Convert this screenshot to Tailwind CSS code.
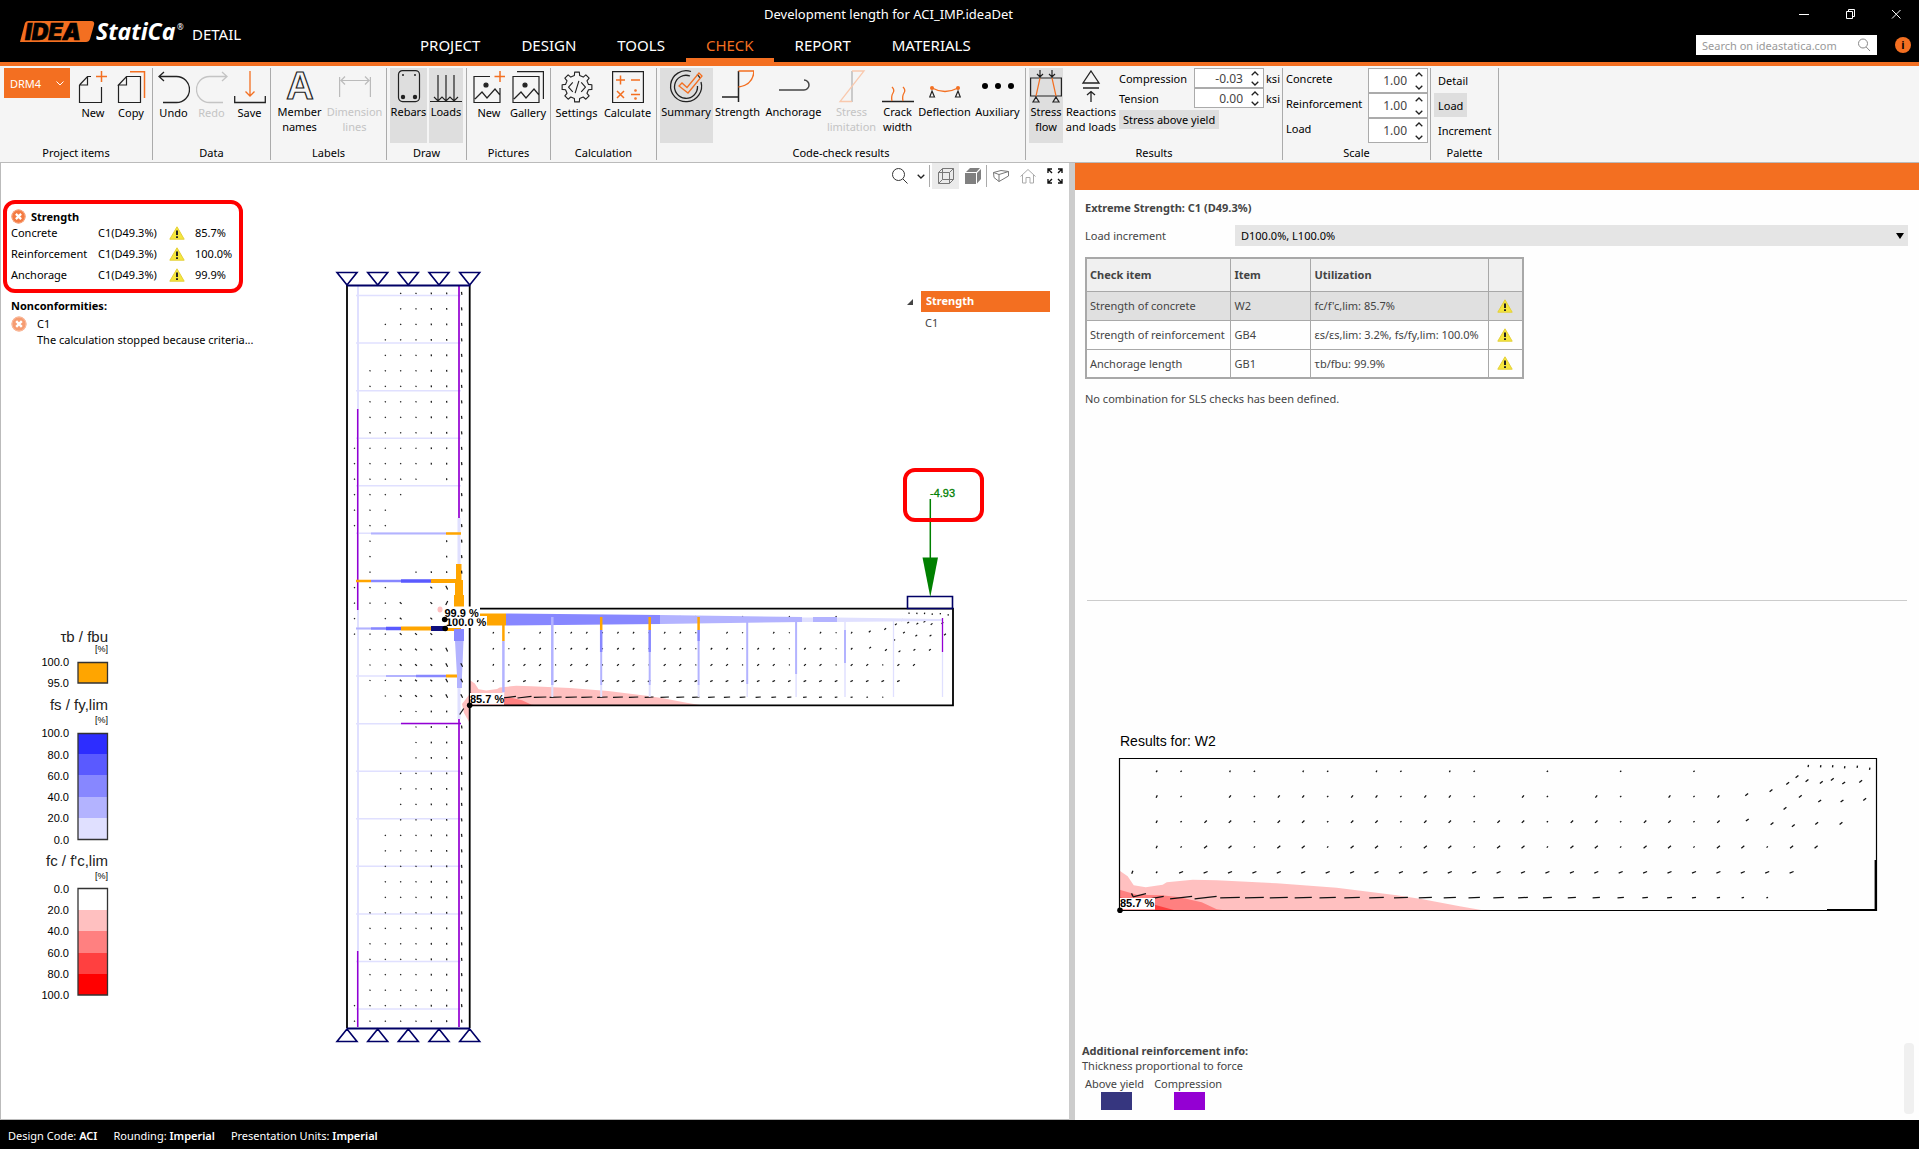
<!DOCTYPE html>
<html lang="en">
<head>
    <meta charset="UTF-8">
    <meta name="viewport" content="width=device-width, initial-scale=1.0">
    <title>Development length for ACI_IMP.ideaDet</title>
    <script src="https://cdn.jsdelivr.net/npm/@tailwindcss/browser@4"></script>
</head>
<body class="min-h-screen flex flex-col bg-white text-black font-['Noto_Sans',sans-serif] text-[11px] leading-[15px]">

    <!-- Shared symbols -->
    <svg class="hidden">
        <symbol id="warn" viewBox="0 0 16 14">
            <path d="M8 .8L15.2 13.2H.8Z" fill="#f5e63c" stroke="#e3cf3a" stroke-linejoin="round"/>
            <path d="M8 4.5V9M8 10.2V12" stroke="#222" stroke-width="2"/>
        </symbol>
        <symbol id="fail" viewBox="0 0 16 16">
            <circle cx="8" cy="8" r="7.5" fill="#f47b42"/>
            <circle cx="8" cy="8" r="7" fill="none" stroke="#f9ab86"/>
            <path d="M5.2 5.2L10.8 10.8M10.8 5.2L5.2 10.8" stroke="#fff" stroke-width="2.4"/>
        </symbol>
        <symbol id="spin-up" viewBox="0 0 8 5"><path d="M.7 4.3L4 1L7.3 4.3" fill="none" stroke="#222" stroke-width="1.3"/></symbol>
        <symbol id="spin-down" viewBox="0 0 8 5"><path d="M.7 .7L4 4L7.3 .7" fill="none" stroke="#222" stroke-width="1.3"/></symbol>
    </svg>

    <!-- Title bar and main menu -->
    <header class="flex h-[66px] bg-black border-b-4 border-[#f36f21] text-white">
        <div class="w-[400px] flex items-start pt-5 pl-5">
            <svg class="w-[166px] h-6 overflow-visible" viewBox="0 0 166 24" role="img" aria-label="IDEA StatiCa">
                <path d="M8 1H71Q75 1 74 5L70 19Q69 22 66 22H0L5 3Q6 1 8 1Z" fill="#f36f21"/>
                <text x="5" y="20" font-family="Inter" font-weight="900" font-style="italic" font-size="23" fill="#000" stroke="#000" stroke-width=".6">IDEA</text>
                <text x="76" y="20" font-family="Noto Sans" font-weight="700" font-style="italic" font-size="23" fill="#fff">StatiCa</text>
                <text x="157" y="10" font-family="Noto Sans" font-size="8" fill="#fff">®</text>
            </svg>
            <span class="ml-1.5 mt-1 text-[15px] leading-[20px]">DETAIL</span>
        </div>
        <div class="flex-1 flex flex-col">
            <div class="h-7 flex items-center">
                <h1 class="ml-[364px] text-[13px]">Development length for ACI_IMP.ideaDet</h1>
                <div class="ml-auto flex">
                    <button class="w-[46px] h-7 flex items-center justify-center" aria-label="Minimize"><svg class="w-3 h-3" viewBox="0 0 12 12"><path d="M1 6.5H11" stroke="#fff"/></svg></button>
                    <button class="w-[46px] h-7 flex items-center justify-center" aria-label="Restore"><svg class="w-3 h-3" viewBox="0 0 12 12" fill="none" stroke="#fff"><path d="M2.5 3.5H8.5V10.5H2.5ZM4.5 3V1.5H10.5V8.5H9"/></svg></button>
                    <button class="w-[46px] h-7 flex items-center justify-center" aria-label="Close"><svg class="w-3 h-3" viewBox="0 0 12 12"><path d="M2 2L10.5 10.5M10.5 2L2 10.5" stroke="#fff"/></svg></button>
                </div>
            </div>
            <div class="h-[34px] flex items-center">
                <nav class="h-full flex gap-px text-[15px] leading-[35px]">
                    <a href="#" class="px-5">PROJECT</a>
                    <a href="#" class="px-5">DESIGN</a>
                    <a href="#" class="px-5">TOOLS</a>
                    <a href="#" class="px-5 text-[#f36f21] border-b-4 border-[#f36f21]">CHECK</a>
                    <a href="#" class="px-5">REPORT</a>
                    <a href="#" class="px-5">MATERIALS</a>
                </nav>
                <div class="ml-auto w-[181px] h-5 bg-white flex items-center px-1.5">
                    <input type="text" aria-label="Search" placeholder="Search on ideastatica.com" class="w-full min-w-0 outline-none text-[11px] text-gray-500 placeholder:text-[#999]">
                    <svg class="w-3.5 h-3.5 shrink-0" viewBox="0 0 14 14" fill="none" stroke="#888"><circle cx="6" cy="5.5" r="4.5"/><path d="M9.2 9L13 13"/></svg>
                </div>
                <button class="ml-[18px] mr-2 w-4 h-4 rounded-full bg-[#f36f21] text-black text-[11px] leading-4 font-bold" aria-label="Info">i</button>
            </div>
        </div>
    </header>

    <!-- Ribbon -->
    <div class="h-[97px] flex bg-[#f5f5f5] border-b border-[#bbb] py-0.5">
        <section class="w-[153px] flex flex-col justify-between border-r border-[#ababab] text-center">
            <div class="flex pl-1">
                <button class="w-[66px] h-[30px] mr-1 bg-[#f36f21] text-white flex items-center justify-between px-1.5">DRM4
                    <svg class="w-2 h-[5px]" viewBox="0 0 8 5"><path d="M.5 .5L4 4L7.5 .5" fill="none" stroke="#fff"/></svg></button>
                <button class="w-[38px] flex flex-col items-center pt-[3px]">
                    <svg class="w-8 h-[34px]" viewBox="2 0 32 34" fill="none" stroke="#222" stroke-width="1.2"><path d="M4.5 14V31.5H26.5V16M4.5 14L12.5 5.5H16M12.5 5.5V14H4.5"/><path d="M26.5 0V11M21 5.5H32" stroke="#f36f21" stroke-width="1.5"/></svg>
                    New</button>
                <button class="w-[38px] flex flex-col items-center pt-[3px]">
                    <svg class="w-8 h-[34px]" viewBox="0 0 32 34" fill="none" stroke="#222" stroke-width="1.2"><path d="M3.5 14V31.5H25.5V5.5H11.5L3.5 14H11.5V5.5"/><path d="M15 .7H29.5V27" stroke="#f36f21" stroke-width="1.5"/></svg>
                    Copy</button>
            </div>
            <h2>Project items</h2>
        </section>
        <section class="w-[118px] flex flex-col justify-between border-r border-[#ababab] text-center">
            <div class="flex justify-center">
                <button class="w-[38px] flex flex-col items-center pt-[3px]">
                    <svg class="w-8 h-[34px]" viewBox="0 0 32 34" fill="none" stroke="#222" stroke-width="1.3"><path d="M1 5.5H18.5a13 13 0 0 1 0 26H5M6 1L1 5.5L6 10"/></svg>
                    Undo</button>
                <button class="w-[38px] flex flex-col items-center pt-[3px] text-[#c4c4c4]">
                    <svg class="w-8 h-[34px]" viewBox="0 0 32 34" fill="none" stroke="#c4c4c4" stroke-width="1.3"><path d="M31 5.5H13.5a13 13 0 0 0 0 26H27M26 1L31 5.5L26 10"/></svg>
                    Redo</button>
                <button class="w-[38px] flex flex-col items-center pt-[3px]">
                    <svg class="w-8 h-[34px]" viewBox="0 0 32 34" fill="none" stroke="#222" stroke-width="1.3"><path d="M.7 25V31.5H31.3V25"/><path d="M16 0V25M11.5 20.5L16 25L20.5 20.5" stroke="#f36f21"/></svg>
                    Save</button>
            </div>
            <h2>Data</h2>
        </section>
        <section class="w-[116px] flex flex-col justify-between border-r border-[#ababab] text-center">
            <div class="flex justify-center">
                <button class="w-[52px] flex flex-col items-center pt-0.5">
                    <svg class="w-8 h-[34px] overflow-visible" viewBox="0 0 32 34"><text x="16" y="29" text-anchor="middle" font-family="Liberation Sans" font-weight="700" font-size="38" fill="none" stroke="#222" stroke-width="1.2">A</text></svg>
                    Member<br>names</button>
                <button class="w-[58px] flex flex-col items-center pt-0.5 text-[#c4c4c4]">
                    <svg class="w-8 h-[34px]" viewBox="0 0 32 34" fill="none" stroke="#bbb" stroke-width="1.2"><path d="M.6 7V27M31.4 7V27M2 10.5H30M6 6.5L2 10.5L6 14.5M26 6.5L30 10.5L26 14.5"/></svg>
                    Dimension<br>lines</button>
            </div>
            <h2>Labels</h2>
        </section>
        <section class="w-[80px] flex flex-col justify-between border-r border-[#ababab] text-center">
            <div class="flex justify-center gap-0.5">
                <button class="w-[37px] h-[75px] flex flex-col items-center pt-0.5 bg-[#dedede]">
                    <svg class="w-8 h-[34px]" viewBox="0 0 32 34" fill="none" stroke="#222" stroke-width="1.2"><rect x="5.5" y=".6" width="21" height="31" rx="4"/><g fill="#222" stroke="none"><circle cx="10" cy="5" r="1"/><circle cx="22" cy="5" r="1"/><circle cx="10" cy="27" r="2.2"/><circle cx="22" cy="27" r="2.2"/></g></svg>
                    Rebars</button>
                <button class="w-[34px] h-[75px] flex flex-col items-center pt-0.5 bg-[#dedede]">
                    <svg class="w-8 h-[34px]" viewBox="0 0 32 34" fill="none" stroke="#222" stroke-width="1.2"><path d="M0 31.5H32M8 5V31M16 5V31M24 5V31M4 27L8 31L12 27L16 31L20 27L24 31L28 27"/></svg>
                    Loads</button>
            </div>
            <h2>Draw</h2>
        </section>
        <section class="w-[84px] flex flex-col justify-between border-r border-[#ababab] text-center">
            <div class="flex justify-center">
                <button class="w-[39px] flex flex-col items-center pt-[3px]">
                    <svg class="w-8 h-[34px]" viewBox="0 0 32 34" fill="none" stroke="#222" stroke-width="1.2"><path d="M17 5.5H1V31.5H27V17M2 28L9 21L14 27L22 18L27 24"/><circle cx="13" cy="14" r="2" fill="#222"/><path d="M27 0V11M21.5 5.5H32" stroke="#f36f21" stroke-width="1.5"/></svg>
                    New</button>
                <button class="w-[39px] flex flex-col items-center pt-[3px]">
                    <svg class="w-8 h-[34px]" viewBox="0 0 32 34" fill="none" stroke="#222" stroke-width="1.2"><path d="M1 5.5H27V31.5H1ZM5 .6H31.4V28M2 28L9 21L14 27L22 18L27 24"/><circle cx="13" cy="14" r="2" fill="#222"/></svg>
                    Gallery</button>
            </div>
            <h2>Pictures</h2>
        </section>
        <section class="w-[106px] flex flex-col justify-between border-r border-[#ababab] text-center">
            <div class="flex justify-center">
                <button class="w-[48px] flex flex-col items-center pt-[3px]">
                    <svg class="w-8 h-[34px]" viewBox="0 1 34 34" fill="none" stroke="#222" stroke-width="1.2" stroke-linejoin="round"><path d="M29.2 14.2L32.8 14.5V19.5L29.2 19.8L27.6 23.6L29.9 26.4L26.4 29.9L23.6 27.6L19.8 29.2L19.5 32.8H14.5L14.2 29.2L10.4 27.6L7.6 29.9L4.1 26.4L6.4 23.6L4.8 19.8L1.2 19.5V14.5L4.8 14.2L6.4 10.4L4.1 7.6L7.6 4.1L10.4 6.4L14.2 4.8L14.5 1.2H19.5L19.8 4.8L23.6 6.4L26.4 4.1L29.9 7.6L27.6 10.4Z"/><path d="M12.5 12L8 17L12.5 22M21.5 12L26 17L21.5 22M19 10.5L15 23.5"/></svg>
                    Settings</button>
                <button class="w-[54px] flex flex-col items-center pt-[3px]">
                    <svg class="w-8 h-[34px]" viewBox="0 0 32 34" fill="none" stroke="#222" stroke-width="1.2"><path d="M.6 .6H31.4V31.5H.6Z"/><g stroke="#f36f21" stroke-width="1.5"><path d="M4 9H13M8.5 4.5V13.5M19 9H28M5 20L12 27M12 20L5 27M19 23.5H28"/><circle cx="23.5" cy="19.5" r=".6"/><circle cx="23.5" cy="27.5" r=".6"/></g></svg>
                    Calculate</button>
            </div>
            <h2>Calculation</h2>
        </section>
        <section class="w-[369px] flex flex-col justify-between border-r border-[#ababab] text-center">
            <div class="flex justify-center">
                <button class="w-[53px] h-[75px] flex flex-col items-center pt-0.5 bg-[#dedede]">
                    <svg class="w-8 h-[34px] overflow-visible" viewBox="0 0 32 34" fill="none" stroke="#222" stroke-width="1.3"><path d="M21 1.5A15.5 15.5 0 1 0 31 12M27 4.5Q29 6 30 8M20 6A11.5 11.5 0 1 0 27.5 16"/><path d="M9 16L12 13L17 17.5L29 3L32 6L18 23Z" stroke="#f36f21"/></svg>
                    Summary</button>
                <button class="w-[50px] flex flex-col items-center pt-0.5">
                    <svg class="w-8 h-[34px]" viewBox="0 0 32 34" fill="none" stroke="#222" stroke-width="1.5"><path d="M0 27H16M16.5 1V32"/><path d="M16.5 1H32Q31 15 16.5 17" stroke="#f36f21"/></svg>
                    Strength</button>
                <button class="w-[62px] flex flex-col items-center pt-0.5">
                    <svg class="w-8 h-[34px]" viewBox="0 0 32 34" fill="none" stroke="#444" stroke-width="1.5"><path d="M1 20H26A5 5 0 0 0 26 10"/></svg>
                    Anchorage</button>
                <button class="w-[54px] flex flex-col items-center pt-0.5 text-[#c4c4c4]">
                    <svg class="w-8 h-[34px]" viewBox="0 0 32 34" fill="none"><path d="M16 1V32" stroke="#bbb" stroke-width="1.5"/><path d="M16 1H28L4 31.5H16" stroke="#f9c9ae" stroke-width="1.3"/></svg>
                    Stress<br>limitation</button>
                <button class="w-[38px] flex flex-col items-center pt-0.5">
                    <svg class="w-8 h-[34px]" viewBox="0 0 32 34" fill="none"><path d="M0 31.5H32" stroke="#222" stroke-width="1.5"/><path d="M10 17Q13 20 11 23T10 31M21 17Q24 20 22 23T21 31" stroke="#f36f21" stroke-width="1.3"/></svg>
                    Crack<br>width</button>
                <button class="w-[56px] flex flex-col items-center pt-0.5">
                    <svg class="w-8 h-[34px]" viewBox="0 0 32 34" fill="none"><path d="M3 18Q16 25 29 18" stroke="#f36f21" stroke-width="1.4"/><circle cx="3" cy="18" r="2" fill="#f36f21"/><circle cx="29" cy="18" r="2" fill="#f36f21"/><path d="M3 21L5.5 27H.7ZM29 21L31.3 27H26.5Z" stroke="#222" stroke-width="1.2"/></svg>
                    Deflection</button>
                <button class="w-[50px] flex flex-col items-center pt-0.5">
                    <svg class="w-8 h-[34px]" viewBox="0 0 32 34"><circle cx="3" cy="16" r="3"/><circle cx="16" cy="16" r="3"/><circle cx="29" cy="16" r="3"/></svg>
                    Auxiliary</button>
            </div>
            <h2>Code-check results</h2>
        </section>
        <section class="w-[257px] flex flex-col justify-between border-r border-[#ababab]">
            <div class="flex pl-[3px]">
                <button class="w-[34px] h-[75px] flex flex-col items-center pt-0.5 bg-[#dedede]">
                    <svg class="w-8 h-[34px]" viewBox="0 0 32 34" fill="none" stroke="#222" stroke-width="1.2"><path d="M.6 8H31.4V26H.6ZM10 0V7M7 4L10 7L13 4M22 0V7M19 4L22 7L25 4M6 27L9 32H3ZM26 27L29 32H23Z"/><path d="M10 8L6 26M22 8L26 26" stroke="#f36f21"/></svg>
                    Stress<br>flow</button>
                <button class="w-[56px] flex flex-col items-center pt-0.5">
                    <svg class="w-8 h-[34px]" viewBox="0 0 32 34" fill="none" stroke="#222" stroke-width="1.3"><path d="M16 1L24 13H8ZM8 18H24M16 32V21M12 25L16 21.5L20 25"/></svg>
                    Reactions<br>and loads</button>
                <div>
                    <div class="flex items-center">
                        <label for="comp" class="w-[75px]">Compression</label>
                        <span class="w-[70px] h-5 flex items-center border border-[#ababab] bg-white pr-1">
                            <input id="comp" type="text" value="-0.03" class="w-full min-w-0 text-right text-[12px] text-[#444] pr-2">
                            <span class="flex flex-col gap-[5px]"><svg class="w-2 h-[5px]"><use href="#spin-up"/></svg><svg class="w-2 h-[5px]"><use href="#spin-down"/></svg></span>
                        </span>
                        <span class="ml-0.5">ksi</span>
                    </div>
                    <div class="flex items-center">
                        <label for="tens" class="w-[75px]">Tension</label>
                        <span class="w-[70px] h-5 flex items-center border border-[#ababab] bg-white pr-1">
                            <input id="tens" type="text" value="0.00" class="w-full min-w-0 text-right text-[12px] text-[#444] pr-2">
                            <span class="flex flex-col gap-[5px]"><svg class="w-2 h-[5px]"><use href="#spin-up"/></svg><svg class="w-2 h-[5px]"><use href="#spin-down"/></svg></span>
                        </span>
                        <span class="ml-0.5">ksi</span>
                    </div>
                    <button class="mt-0.5 h-[19px] px-1 bg-[#dedede]">Stress above yield</button>
                </div>
            </div>
            <h2 class="text-center">Results</h2>
        </section>
        <section class="w-[148px] flex flex-col justify-between border-r border-[#ababab]">
            <div class="flex flex-col pl-[3px] pr-0.5">
                <div class="flex justify-between">
                    <label for="sc" class="pt-[3px]">Concrete</label>
                    <span class="w-[60px] h-[25px] flex items-center border border-[#ababab] bg-white pr-1">
                        <input id="sc" type="text" value="1.00" class="w-full min-w-0 text-right text-[12px] text-[#444] pr-2">
                        <span class="flex flex-col gap-2"><svg class="w-2 h-[5px]"><use href="#spin-up"/></svg><svg class="w-2 h-[5px]"><use href="#spin-down"/></svg></span>
                    </span>
                </div>
                <div class="flex justify-between">
                    <label for="sr" class="pt-[3px]">Reinforcement</label>
                    <span class="w-[60px] h-[25px] flex items-center border border-[#ababab] bg-white pr-1">
                        <input id="sr" type="text" value="1.00" class="w-full min-w-0 text-right text-[12px] text-[#444] pr-2">
                        <span class="flex flex-col gap-2"><svg class="w-2 h-[5px]"><use href="#spin-up"/></svg><svg class="w-2 h-[5px]"><use href="#spin-down"/></svg></span>
                    </span>
                </div>
                <div class="flex justify-between">
                    <label for="sl" class="pt-[3px]">Load</label>
                    <span class="w-[60px] h-[25px] flex items-center border border-[#ababab] bg-white pr-1">
                        <input id="sl" type="text" value="1.00" class="w-full min-w-0 text-right text-[12px] text-[#444] pr-2">
                        <span class="flex flex-col gap-2"><svg class="w-2 h-[5px]"><use href="#spin-up"/></svg><svg class="w-2 h-[5px]"><use href="#spin-down"/></svg></span>
                    </span>
                </div>
            </div>
            <h2 class="text-center">Scale</h2>
        </section>
        <section class="w-[68px] flex flex-col justify-between border-r border-[#ababab]">
            <div class="flex flex-col items-start pl-[3px]">
                <button class="h-[25px] px-1">Detail</button>
                <button class="h-6 px-1 bg-[#dedede]">Load</button>
                <button class="h-[26px] px-1">Increment</button>
            </div>
            <h2 class="text-center">Palette</h2>
        </section>
    </div>

    <main class="flex-1 grid grid-cols-[1069fr_850fr]">
        <!-- Model view -->
        <section class="relative border-l border-b border-[#bbb]">
            <svg class="absolute inset-0 w-full h-full" viewBox="1 163 1068 956" preserveAspectRatio="xMinYMin meet" font-family="Liberation Sans">
                <!-- Legend -->
                <g text-anchor="end" font-size="15" fill="#222">
                    <text x="108" y="642">τb / fbu</text>
                    <text x="108" y="710">fs / fy,lim</text>
                    <text x="108" y="866">fc / f'c,lim</text>
                </g>
                <g text-anchor="end" font-size="9">
                    <text x="108" y="652">[%]</text>
                    <text x="108" y="723">[%]</text>
                    <text x="108" y="879">[%]</text>
                </g>
                <g text-anchor="end" font-size="11">
                    <text x="69" y="666">100.0</text><text x="69" y="687">95.0</text>
                    <text x="69" y="737">100.0</text><text x="69" y="759">80.0</text><text x="69" y="780">60.0</text><text x="69" y="801">40.0</text><text x="69" y="822">20.0</text><text x="69" y="844">0.0</text>
                    <text x="69" y="893">0.0</text><text x="69" y="914">20.0</text><text x="69" y="935">40.0</text><text x="69" y="957">60.0</text><text x="69" y="978">80.0</text><text x="69" y="999">100.0</text>
                </g>
                <path d="M78 662H108V683H78Z" fill="#ffa500"/>
                <path d="M78 733H108V754H78Z" fill="#2d2dff"/>
                <path d="M78 754H108V775H78Z" fill="#5a5aff"/>
                <path d="M78 775H108V797H78Z" fill="#8787ff"/>
                <path d="M78 797H108V818H78Z" fill="#b3b3ff"/>
                <path d="M78 818H108V840H78Z" fill="#e0e0ff"/>
                <path d="M78 910H108V931H78Z" fill="#ffc0c0"/>
                <path d="M78 931H108V953H78Z" fill="#ff8080"/>
                <path d="M78 953H108V974H78Z" fill="#ff4040"/>
                <path d="M78 974H108V995H78Z" fill="#ff0000"/>
                <path d="M78 662.5H107.5V683H78ZM78 733.5H107.5V839.5H78ZM78 888.5H107.5V995H78Z" fill="none" stroke="#333" stroke-width="1.3"/>

                <!-- Column reinforcement -->
                <g id="ties" stroke="#e0e0ff" stroke-width="1.5"></g>
                <path d="M358 286V1027" stroke="#e0e0ff" stroke-width="2"/>
                <path d="M357.7 409V610M357.7 951V1027" stroke="#9400d3" stroke-width="1.5"/>
                <path d="M459 518V564M459 688V719" stroke="#e0e0ff" stroke-width="3"/>
                <path d="M459 286V518M459 719V1027" stroke="#9400d3" stroke-width="1.7"/>
                <path d="M371 533.5H446" stroke="#b3b3ff" stroke-width="2"/>
                <path d="M446 533.5H461M356 581H371" stroke="#ffa500" stroke-width="2.5"/>
                <path d="M371 581H401M386 628.5H371M416 676H446" stroke="#8787ff" stroke-width="2.5"/>
                <path d="M401 581H431M386 628.5H401" stroke="#5a5aff" stroke-width="3.5"/>
                <path d="M431 581H457M401 628.5H431" stroke="#ffa500" stroke-width="4"/>
                <path d="M356 628.5H371M386 676H416" stroke="#b3b3ff" stroke-width="2"/>
                <path d="M431 628.5H446" stroke="#10107c" stroke-width="5"/>
                <path d="M446 629.5H461M446 676H461" stroke="#ffa500" stroke-width="3"/>
                <path d="M401 723.5H461" stroke="#9400d3" stroke-width="1.3"/>
                <path d="M456 564H461.5V580H463V595H464V610H454V595H455V580H456Z" fill="#ffa500"/>
                <path d="M454 629H464V641H454Z" fill="#8787ff"/>
                <path d="M455 641H463.5L462 676V688H457V676Z" fill="#b3b3ff"/>
                <path d="M469.7 694L462 704L464 713L469.7 723Z" fill="#ffc0c0"/>
                <ellipse cx="440" cy="609.5" rx="2.5" ry="3" fill="#ffc0c0"/>

                <!-- Beam reinforcement -->
                <g id="field-left"></g>
                <path d="M480 613.5H506V625.5H487V616H480Z" fill="#ffa500"/>
                <path d="M506 613.5L660 615V624L506 625.5Z" fill="#8787ff"/>
                <path d="M660 615L802 617V622L660 624ZM813 617H837V622H813Z" fill="#b3b3ff"/>
                <path d="M802 617.5H813V622H802ZM837 617.5L942 619V621L837 622Z" fill="#e0e0ff"/>
                <g id="stirrups"></g>
                <g id="dots" stroke="#111" stroke-width="1.2"></g>

                <!-- Outline and supports -->
                <path d="M347 285V1028M469.7 285V1028M469.7 608.7H953V705.3H469.7" fill="none" stroke="#000" stroke-width="1.8"/>
                <g fill="none" stroke="#000066" stroke-width="1.6">
                    <path d="M347 285.5H470M347 1028.5H470" stroke-width="2"/>
                    <path d="M347 285L337 272.5H357ZM377.7 285L367.7 272.5H387.7ZM408.3 285L398.3 272.5H418.3ZM439 285L429 272.5H449ZM469.7 285L459.7 272.5H479.7Z"/>
                    <path d="M347 1029L337 1041.5H357ZM377.7 1029L367.7 1041.5H387.7ZM408.3 1029L398.3 1041.5H418.3ZM439 1029L429 1041.5H449ZM469.7 1029L459.7 1041.5H479.7Z"/>
                    <path d="M907.5 596.5H952.5V608.5H907.5Z"/>
                </g>

                <!-- Load -->
                <path d="M930.3 499V560" stroke="#008000" stroke-width="1.5"/>
                <path d="M922.5 557.5H938L930.3 597Z" fill="#008000"/>
                <text x="930" y="497" font-size="11" fill="#008000" stroke="#008000" stroke-width=".3">-4.93</text>
                <rect x="905" y="470" width="77" height="50" rx="10" fill="none" stroke="#f00" stroke-width="4"/>

                <!-- Extremes -->
                <g font-size="11" font-weight="700">
                    <path d="M446 616H486V628H446Z" fill="#fff"/><text x="446" y="626">100.0 %</text>
                    <path d="M444.5 606.5H480V618.5H444.5Z" fill="#fff"/><text x="444.5" y="617">99.9 %</text>
                    <path d="M470 693H504V704.5H470Z" fill="#fff"/><text x="470" y="703">85.7 %</text>
                    <circle cx="444.7" cy="619.5" r="2.8"/><circle cx="445.2" cy="628.5" r="2.8"/><circle cx="469.7" cy="705.3" r="2.8"/>
                </g>
            </svg>

            <!-- Check summary -->
            <div class="absolute left-0.5 top-[37px] w-[240px] h-[93px] border-4 border-[#f00] rounded-[12px] pl-1 pt-1">
                <div class="flex items-center gap-[5px] h-4 font-bold"><svg class="w-[15px] h-[15px]"><use href="#fail"/></svg>Strength</div>
                <div class="grid grid-cols-[87px_75px_22px_auto] auto-rows-[21px] items-center -mt-0.5">
                    <span>Concrete</span><span>C1(D49.3%)</span><svg class="-ml-1 w-4 h-3.5"><use href="#warn"/></svg><span>85.7%</span>
                    <span>Reinforcement</span><span>C1(D49.3%)</span><svg class="-ml-1 w-4 h-3.5"><use href="#warn"/></svg><span>100.0%</span>
                    <span>Anchorage</span><span>C1(D49.3%)</span><svg class="-ml-1 w-4 h-3.5"><use href="#warn"/></svg><span>99.9%</span>
                </div>
            </div>
            <div class="absolute left-2.5 top-[135px]">
                <div class="font-bold">Nonconformities:</div>
                <div class="flex gap-2.5 mt-[3px]">
                    <svg class="w-4 h-4 opacity-75"><use href="#fail"/></svg>
                    <div class="leading-4">C1<br>The calculation stopped because criteria...</div>
                </div>
            </div>

            <!-- View tools -->
            <div class="absolute right-0 top-0 h-[26px] flex items-center">
                <button class="w-[27px] flex justify-center" aria-label="Zoom"><svg class="w-4 h-4" viewBox="0 0 16 16" fill="none" stroke="#333"><circle cx="6.5" cy="6.5" r="6"/><path d="M11 11L15.5 15.5"/></svg></button>
                <button class="w-4 flex justify-center" aria-label="Zoom options"><svg class="w-2 h-[5px]"><use href="#spin-down"/></svg></button>
                <span class="w-px h-[22px] bg-[#aaa] mr-0.5"></span>
                <button class="w-[27px] h-[26px] flex items-center justify-center bg-[#ebebeb]" aria-label="Wireframe"><svg class="w-4 h-4" viewBox="0 0 16 16" fill="none" stroke="#777"><path d="M.5 4.5H11.5V15.5H.5ZM.5 4.5L4.5 .5H15.5L11.5 4.5M15.5 .5V11.5L11.5 15.5M4.5 .5V11.5H15.5M4.5 11.5L.5 15.5"/></svg></button>
                <button class="w-[27px] flex justify-center" aria-label="Solid"><svg class="w-4 h-4" viewBox="0 0 16 16" fill="#808080"><path d="M0 5H11V16H0ZM1 4L5 0H15L11.5 4ZM12 5L16 1V11L12 15.5Z"/></svg></button>
                <span class="w-px h-[22px] bg-[#aaa]"></span>
                <button class="w-[27px] flex justify-center" aria-label="Perspective"><svg class="w-4 h-4" viewBox="0 0 16 16" fill="none" stroke="#777"><path d="M.5 4.5L6 6.5V13.5L1 9.5ZM.5 4.5L8 2.5L15.5 3.5V8L6 13.5M6 6.5L15.5 3.5"/></svg></button>
                <button class="w-[27px] flex justify-center" aria-label="Home"><svg class="w-4 h-4" viewBox="0 0 16 16" fill="none" stroke="#aaa"><path d="M.5 8.5L8 1.5L15.5 8.5M2.5 7V15H6V9.5H10V15H13.5V7"/></svg></button>
                <button class="w-[28px] flex justify-center" aria-label="Fit"><svg class="w-4 h-4" viewBox="0 0 16 16" fill="none" stroke="#111" stroke-width="1.4"><path d="M1 5V1H5M1 1L5 5M11 1H15V5M15 1L11 5M1 11V15H5M1 15L5 11M15 11V15H11M15 15L11 11"/></svg></button>
            </div>

            <!-- Result tree -->
            <div class="absolute right-[19px] top-[128px] flex">
                <svg class="w-1.5 h-1.5 mt-2 mr-2" viewBox="0 0 6 6"><path d="M6 0V6H0Z" fill="#444"/></svg>
                <div class="w-[129px]">
                    <div class="h-[21px] leading-[20px] pl-[5px] font-bold text-white bg-[#f36f21]">Strength</div>
                    <div class="h-[22px] leading-[22px] pl-1 text-[#444]">C1</div>
                </div>
            </div>
        </section>

        <!-- Results panel -->
        <section class="border-l-[6px] border-[#ccc] bg-[#fefefe] text-[#444] grid grid-rows-[27px_410fr_440fr_80px]">
            <div class="bg-[#f36f21]"></div>
            <div class="pl-2.5 pr-[11px] pt-2.5">
                <h3 class="font-bold">Extreme Strength: C1 (D49.3%)</h3>
                <div class="flex items-center mt-2.5">
                    <label for="inc" class="w-[150px]">Load increment</label>
                    <div class="flex-1 relative">
                        <select id="inc" class="w-full h-[21px] appearance-none bg-[#e5e5e5] text-black pl-1.5"><option>D100.0%, L100.0%</option></select>
                        <svg class="absolute right-1 top-2 w-2 h-1.5" viewBox="0 0 8 6"><path d="M0 0H8L4 6Z"/></svg>
                    </div>
                </div>
                <table class="mt-[11px] w-[439px] table-fixed border-collapse border-2 border-[#a8a8a8] text-left">
                    <thead>
                        <tr class="h-[33px] bg-[#f0f0f0]">
                            <th class="w-[144px] border border-[#a8a8a8] px-[3px]">Check item</th>
                            <th class="w-[80px] border border-[#a8a8a8] px-1">Item</th>
                            <th class="w-[178px] border border-[#a8a8a8] px-1">Utilization</th>
                            <th class="border border-[#a8a8a8]"></th>
                        </tr>
                    </thead>
                    <tbody>
                        <tr class="h-[29px] bg-[#e0e0e0]">
                            <td class="border border-[#a8a8a8] px-[3px]">Strength of concrete</td>
                            <td class="border border-[#a8a8a8] px-1">W2</td>
                            <td class="border border-[#a8a8a8] px-1">fc/f'c,lim: 85.7%</td>
                            <td class="border border-[#a8a8a8]"><svg class="mx-auto w-4 h-3.5"><use href="#warn"/></svg></td>
                        </tr>
                        <tr class="h-[29px]">
                            <td class="border border-[#a8a8a8] px-[3px] whitespace-nowrap">Strength of reinforcement</td>
                            <td class="border border-[#a8a8a8] px-1">GB4</td>
                            <td class="border border-[#a8a8a8] px-1 whitespace-nowrap">εs/εs,lim: 3.2%, fs/fy,lim: 100.0%</td>
                            <td class="border border-[#a8a8a8]"><svg class="mx-auto w-4 h-3.5"><use href="#warn"/></svg></td>
                        </tr>
                        <tr class="h-[29px]">
                            <td class="border border-[#a8a8a8] px-[3px]">Anchorage length</td>
                            <td class="border border-[#a8a8a8] px-1">GB1</td>
                            <td class="border border-[#a8a8a8] px-1">τb/fbu: 99.9%</td>
                            <td class="border border-[#a8a8a8]"><svg class="mx-auto w-4 h-3.5"><use href="#warn"/></svg></td>
                        </tr>
                    </tbody>
                </table>
                <p class="mt-3">No combination for SLS checks has been defined.</p>
            </div>
            <div class="mx-3 border-t border-[#ccc] relative">
                <svg class="absolute inset-0 w-full h-full" viewBox="1087 601 820 439" preserveAspectRatio="xMinYMin meet" font-family="Liberation Sans">
                    <text x="1120" y="746" font-size="14">Results for: W2</text>
                    <g id="field-right"></g>
                    <path d="M1119.5 758.5H1876.5V910.5H1119.5Z" fill="none" stroke="#000" stroke-width="1.2"/>
                    <path d="M1875.5 860V910M1827 909.8H1876" stroke="#000" stroke-width="1.8"/>
                    <path d="M1120 898H1155V909.5H1120Z" fill="#fff"/>
                    <text x="1120" y="907" font-size="11" font-weight="700">85.7 %</text>
                    <circle cx="1120" cy="910.3" r="2.8"/>
                </svg>
            </div>
            <div class="flex justify-between pl-[7px] pr-[5px] pt-[3px]">
                <div>
                    <h3 class="font-bold">Additional reinforcement info:</h3>
                    <p>Thickness proportional to force</p>
                    <div class="flex gap-2.5 mt-[3px] pl-[3px]">
                        <div>Above yield<div class="w-[31px] h-[18px] mt-px ml-4 bg-[#36367f]"></div></div>
                        <div>Compression<div class="w-[31px] h-[18px] mt-px ml-5 bg-[#9400d3]"></div></div>
                    </div>
                </div>
                <div class="w-2.5 h-[71px] rounded-sm bg-[#f0f0f0]"></div>
            </div>
        </section>
    </main>

    <footer class="h-[29px] bg-black text-white flex items-center gap-4 pl-2 pt-0.5">
        <span>Design Code: <span class="font-semibold">ACI</span></span>
        <span>Rounding: <span class="font-semibold">Imperial</span></span>
        <span>Presentation Units: <span class="font-semibold">Imperial</span></span>
    </footer>

    <script>
        const line = (x, y, dx, dy) => `<path d="M${(x - dx).toFixed(1)} ${(y - dy).toFixed(1)}L${(x + dx).toFixed(1)} ${(y + dy).toFixed(1)}"/>`;

        // Horizontal ties in the column
        let ties = '';
        for (let i = 0; i < 16; i++) {
            const y = 295.5 + i * 47.57;
            ties += `<path d="M356 ${y}H461"/>`;
        }
        document.getElementById('ties').innerHTML = ties;

        // Principal stress directions in the column, one string per mesh row
        const cols = [354.5, 370, 385.3, 400.7, 416, 431.3, 446.7, 461.7];
        const rows = [
            '34567', '34567', '234567', '234567', '234567', '1234567', '1234567', '1234567', '1234567', '1234567',
            '01234567', '01234567', '0123467', '01237', '0127', '0127', '167', '167', '14567', '01256',
            '012356', '0235', '012345', '123456', '1234567', '1234567', '234567', '34567', '4567', '4567',
            '4567', '34567', '34567', '34567', '34567', '234567', '234567', '234567', '234567', '234567',
            '1234567', '1234567', '1234567', '1234567', '1234567', '1234567', '01234567', '01234567'
        ];
        let dots = '';
        rows.forEach((row, r) => {
            const y = 293.4 + r * 15.485;
            for (const c of row) {
                const i = Number(c);
                let dx = 0.5, dy = 0.4;
                if (i >= 5) { dx = 0.1; dy = 0.9; }
                if (i === 7) { dx = 0.2; dy = 1.5; }
                if (r > 18 && r < 27 && i > 2) { dx = 0.9; dy = i > 5 ? 1.8 : 0.8; }
                if (r === 20 && i === 6) { dx = -1; dy = 2; }
                if (r === 27 && i === 7) { dx = -2; dy = 3; }
                dots += line(cols[i], y, dx, dy);
            }
        });
        document.getElementById('dots').innerHTML = dots;

        // Beam stirrups: [x, [from, to, colour, width], ...]
        const O = '#ffa500', A = '#8787ff', B = '#b3b3ff', C = '#e0e0ff', P = '#9400d3';
        const stirrups = [
            [503.4, [617, 641, O, 2.5], [641, 692, B, 2.5], [692, 697, C, 2]],
            [552.3, [617, 685, B, 2.5], [685, 697, C, 2]],
            [601.2, [617, 630, O, 2.5], [630, 652, A, 2.5], [652, 685, B, 2], [685, 697, C, 2]],
            [649.7, [617, 630, O, 2.5], [630, 652, A, 2.5], [652, 685, B, 2], [685, 697, C, 2]],
            [698.6, [617, 630, O, 2.5], [630, 641, A, 2.5], [641, 685, B, 2], [685, 697, C, 2]],
            [747.2, [622, 684, B, 2], [684, 697, C, 1.5]],
            [796.1, [622, 674, B, 2], [674, 697, C, 1.5]],
            [845, [622, 630, C, 1.5], [630, 663, B, 2], [663, 697, C, 1.5]],
            [893.5, [621, 697, C, 1.3]],
            [942.5, [618, 652, P, 1.3], [652, 697, C, 1.3]]
        ];
        const bars = s => s.slice(1).map(([a, b, col, w]) => `<path d="M${s[0]} ${a}V${b}" stroke="${col}" stroke-width="${w}"/>`).join('');

        // Stress field of wall W2, in the coordinates of the detail view
        const regions = [
            ['#ffc0c0', [0, -39.5, 8, -34, 14, -25, 26, -23, 43, -25.5, 47, -28, 73, -30.5, 97, -30, 157, -27, 217, -22.5, 277, -15, 303, -11, 340, -4, 363, 0, 0, 0]],
            ['#ff8080', [0, -20.5, 17, -15.5, 42, -15, 60, -13, 82, -8, 97, -1, 105, 0, 0, 0]],
            ['#ff4040', [0, -13, 33, -6, 55, 0, 0, 0]]
        ];
        const mesh = [
            [771.3, [1, 2, 4, 5, 7, 8, 10, 11, 13, 14, 17, 20, 23]],
            [796.5, [1, 2, 4, 5, 6, 7, 8, 9, 10, 11, 12, 13, 14, 16, 17, 19, 20, 22, 23, 24]],
            [821.7, Array.from({ length: 24 }, (_, i) => i + 1)],
            [847, Array.from({ length: 28 }, (_, i) => i + 1)],
            [872.3, Array.from({ length: 28 }, (_, i) => i)]
        ];
        const corner = [
            [925, 138], [962, 139], [998, 139], [1034, 142], [1072, 140], [1109, 146], [891, 170], [863, 190], [921, 182],
            [964, 187], [997, 178], [1031, 189], [1082, 184], [901, 229], [959, 243], [1026, 243], [1094, 238], [855, 265],
            [813, 212], [740, 224], [742, 300], [816, 311], [880, 317], [950, 310], [1023, 310]
        ];

        function field(x0, y0, s, w) {
            const X = x => x0 + (x - 1119.7) * s;
            const Y = y => y0 + (y - 910.3) * s;
            let html = '';
            regions.forEach(([col, p]) => {
                let pts = '';
                for (let i = 0; i < p.length; i += 2) pts += `${(x0 + p[i] * s).toFixed(1)},${(y0 + p[i + 1] * s).toFixed(1)} `;
                html += `<polygon points="${pts}" fill="${col}"/>`;
            });
            html += `<g stroke="#111" stroke-width="${w}">`;
            mesh.forEach(([y, list], r) => {
                list.forEach(i => {
                    let dx = 0.6 + r * 0.3, dy = -1.2;
                    if (r === 0) { dx = 0.4; dy = -0.8; }
                    if (r === 4) { dx = 2; dy = i === 0 ? -1.5 : -0.8; }
                    if (i < 2) dx = 0.6;
                    if (i % 3 === 2 && r < 4) { dx = 0.6; dy = -0.6; }
                    html += line(X(1132.3 + i * 24.42), Y(y), dx * s, dy * s);
                });
            });
            corner.forEach(([x, y], i) => {
                html += line(X(1500 + x / 3), Y(720 + y / 3), (i < 6 ? 0.2 : 1.4) * s, -1.1 * s);
            });
            html += line(X(1139.5), Y(895.3), 6.5 * s, -1.6 * s) + line(X(1132.3), Y(895), 0.8 * s, 1.6 * s);
            for (let i = 1; i < 27; i++) {
                const half = i === 1 ? 7 : i < 4 ? 11 : 9.8 - 0.41 * (i - 4);
                html += line(X(1132.3 + i * 24.42), Y(897.6), half * s, (i < 4 ? -1.2 : -0.3) * s);
            }
            return html + '</g>';
        }
        document.getElementById('stirrups').innerHTML = stirrups.map(bars).join('');
        document.getElementById('field-left').innerHTML = field(469.7, 705.3, 0.638, 1.2);
        document.getElementById('field-right').innerHTML = field(1119.7, 910.3, 1, 1.3);
    </script>
</body>
</html>
